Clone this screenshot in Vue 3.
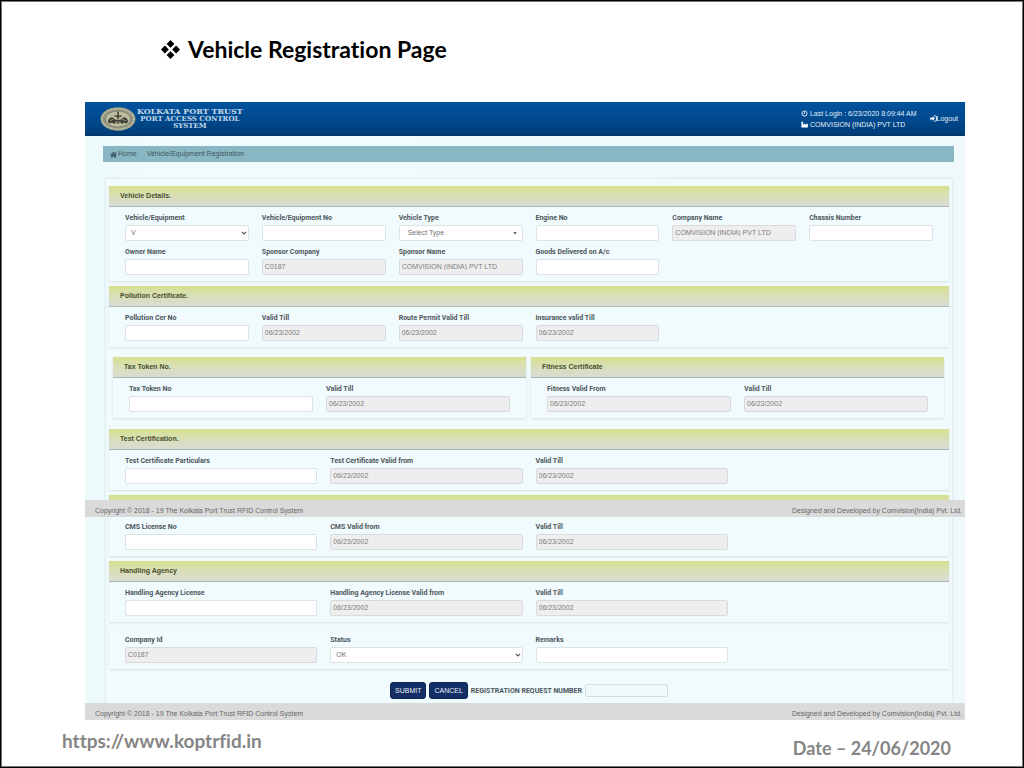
<template>
	<div class="slide">
		<h1 class="slide-title">
			<svg class="bullet" viewBox="0 0 18 18" aria-hidden="true">
				<path d="M9 0l3.700 3.700L9 7.400 5.300 3.700zM3.700 5.300L7.400 9l-3.700 3.700L0 9zM14.300 5.300L18 9l-3.700 3.700L10.600 9zM9 10.600l3.700 3.700L9 18l-3.700-3.700z" />
			</svg>
			<span>Vehicle Registration Page</span>
		</h1>

		<div class="app">
			<header class="topbar">
				<svg class="emblem" viewBox="0 0 36 24" aria-hidden="true">
					<ellipse cx="18" cy="12" rx="17.5" ry="11.7" fill="#8f9582" />
					<ellipse cx="18" cy="12" rx="16" ry="10.3" fill="none" stroke="#c3c3a2" stroke-width="2" stroke-dasharray="1.4 1" />
					<ellipse cx="18" cy="12" rx="12.6" ry="8" fill="#bdbd9e" stroke="#6b6d58" stroke-width=".6" />
					<path d="M17.3 4.500h1.400v4h3v1.200h-3V12h-1.400V9.700h-3V8.500h3z" fill="#33352c" />
					<path d="M8 15c0-3 2-5 4.500-4.500 1.500.3 1.500 2 3 2.200h5c1.500-.2 1.500-1.900 3-2.200C26 10 28 12 28 15l-2 1.500-2-1-2 1.500-2-1.500-2 1.500-2-1.500-2 1.500-2-1.500-2 1z" fill="#3a3b32" />
					<path d="M10 13.500l3-1M22 12.500l4 1M15 15h6" stroke="#c4c3a0" stroke-width=".7" />
				</svg>
				<div class="brand">
					<span class="brand-main">KOLKATA PORT TRUST</span>
					<span>PORT ACCESS CONTROL</span>
					<span>SYSTEM</span>
				</div>
				<div class="session">
					<div class="session-row">
						<svg viewBox="0 0 8 8" aria-hidden="true">
							<circle cx="4" cy="4" r="2.900" fill="none" stroke="#fff" />
							<path d="M4 2.200V4.200H2.800" fill="none" stroke="#fff" stroke-width=".8" />
						</svg>
						<span>Last Login : 6/23/2020 8:09:44 AM</span>
					</div>
					<div class="session-row">
						<svg viewBox="0 0 8 8" aria-hidden="true">
							<path d="M.5 7.500V.8h2v3.400L5 2.800v1.500L7.800 2.800v4.700z" fill="#fff" />
						</svg>
						<span>COMVISION (INDIA) PVT LTD</span>
					</div>
				</div>
				<a class="logout" href="#">
					<svg viewBox="0 0 8 8" aria-hidden="true">
						<path d="M4.500 1h1.700q1.200 0 1.200 1.200v3.600Q7.400 7 6.200 7H4.500" fill="none" stroke="#fff" />
						<path d="M0 3h2.800V1.300L5.800 4l-3 2.700V5H0z" fill="#fff" />
					</svg>
					<span>Logout</span>
				</a>
			</header>

			<nav class="crumbs">
				<a href="#">
					<svg viewBox="0 0 8 8" aria-hidden="true">
						<path d="M4 .8l4 3.400-.6.6L4 2 .6 4.800 0 4.200zM1.200 5L4 2.700 6.800 5v2.500H4.700V5.300H3.300v2.200H1.200zM6 1h1v1.800L6 2z" fill="#34505b" />
					</svg>
					<span>Home</span>
				</a>
				<span>Vehicle/Equipment Registration</span>
			</nav>

			<form class="form" @submit.prevent>
				<div v-for="(row, r) in rows" :key="r" class="row" :class="{ split: row.length > 1 }">
					<section v-for="card in row" :key="card.id" class="card">
						<h2 v-if="card.title !== undefined">{{ card.title }}</h2>
						<div class="fields" :class="['cols-' + card.cols, { plain: card.title === undefined }]">
							<div v-for="(f, i) in card.fields" :key="i" class="field">
								<label :for="card.id + i">{{ f.label }}</label>
								<div v-if="f.options" class="select" :class="f.kind">
									<select :id="card.id + i" v-model="f.value">
										<option v-for="o in f.options" :key="o">{{ o }}</option>
									</select>
									<svg viewBox="0 0 6 6" aria-hidden="true">
										<path v-if="f.kind === 'picker'" d="M1.200 2.200h3.600L3 4.400z" fill="#444" />
										<path v-else d="M.8 1.800L3 4l2.200-2.200" fill="none" stroke="#555" stroke-width="1.100" />
									</svg>
								</div>
								<input v-else :id="card.id + i" v-model="f.value" type="text" :disabled="f.locked">
							</div>
						</div>
						<div v-if="card.bar" class="copyright floating">
							<span>{{ copyLeft }}</span>
							<span>{{ copyRight }}</span>
						</div>
					</section>
				</div>

				<div class="actions">
					<button type="submit">SUBMIT</button>
					<button type="button">CANCEL</button>
					<label for="reqno">REGISTRATION REQUEST NUMBER</label>
					<input id="reqno" type="text" disabled>
				</div>
			</form>

			<footer class="copyright">
				<span>{{ copyLeft }}</span>
				<span>{{ copyRight }}</span>
			</footer>
		</div>

		<div class="slide-foot">
			<a href="https://www.koptrfid.in">https://www.koptrfid.in</a>
			<span class="date">Date – 24/06/2020</span>
		</div>
	</div>
</template>

<script setup>
import { reactive } from "vue";

const copyLeft = "Copyright © 2018 - 19 The Kolkata Port Trust RFID Control System";
const copyRight = "Designed and Developed by Comvision(India) Pvt. Ltd.";

const text = (label) => ({ label, value: "" });
const locked = (label, value = "06/23/2002") => ({ label, value, locked: true });

const rows = reactive([
	[{
		id: "vehicle", title: "Vehicle Details.", cols: 6,
		fields: [
			{ label: "Vehicle/Equipment", value: "V", options: ["V", "E"] },
			text("Vehicle/Equipment No"),
			{ label: "Vehicle Type", value: "Select Type", options: ["Select Type"], kind: "picker" },
			text("Engine No"),
			locked("Company Name", "COMVISION (INDIA) PVT LTD"),
			text("Chassis Number"),
			text("Owner Name"),
			locked("Sponsor Company", "C0187"),
			locked("Sponsor Name", "COMVISION (INDIA) PVT LTD"),
			text("Goods Delivered on A/c"),
		],
	}],
	[{
		id: "pollution", title: "Pollution Certificate.", cols: 6,
		fields: [text("Pollution Cer No"), locked("Valid Till"), locked("Route Permit Valid Till"), locked("Insurance valid Till")],
	}],
	[
		{ id: "tax", title: "Tax Token No.", cols: 2, fields: [text("Tax Token No"), locked("Valid Till")] },
		{ id: "fitness", title: "Fitness Certificate", cols: 2, fields: [locked("Fitness Valid From"), locked("Valid Till")] },
	],
	[{
		id: "test", title: "Test Certification.", cols: 4,
		fields: [text("Test Certificate Particulars"), locked("Test Certificate Valid from"), locked("Valid Till")],
	}],
	[{
		id: "cms", title: "", cols: 4, bar: true,
		fields: [text("CMS License No"), locked("CMS Valid from"), locked("Valid Till")],
	}],
	[{
		id: "agency", title: "Handling Agency", cols: 4,
		fields: [text("Handling Agency License"), locked("Handling Agency License Valid from"), locked("Valid Till")],
	}],
	[{
		id: "status", cols: 4,
		fields: [
			locked("Company Id", "C0187"),
			{ label: "Status", value: "OK", options: ["OK"] },
			text("Remarks"),
		],
	}],
]);
</script>

<style>
body { margin: 0; background: #fff; }
</style>

<style scoped>
* { box-sizing: border-box; }

.slide {
	min-height: 100vh;
	border: 1px solid #000;
	outline: 1px solid #777;
	outline-offset: -2px;
	background: #fff;
	font-family: Lato, "Liberation Sans", sans-serif;
}

.slide-title {
	display: flex;
	align-items: center;
	gap: 8px;
	margin: 0;
	padding: 32px 0 37px 160px;
	font-size: 23px;
	line-height: 32px;
	font-variant-ligatures: none;
	color: #000;
}
.bullet { width: 19px; height: 19px; }

.app {
	margin: 0 58px 0 84px;
	background: linear-gradient(90deg, #ebfafb, #f3fafd 10%, #eff9fb);
	font: 7px/12px "Liberation Sans", Arial, sans-serif;
	color: #444;
}

.topbar {
	display: flex;
	align-items: center;
	height: 34px;
	padding: 0 7px 0 15px;
	background: linear-gradient(#02529c, #004a8f 50%, #003d79);
	border-bottom: 1px solid #033463;
	color: #e4eef7;
}
.emblem { width: 36px; height: 24px; }
.brand {
	display: flex;
	flex-direction: column;
	align-items: center;
	margin-left: 1px;
	font: 700 7px/7px "DejaVu Serif", serif;
	color: #c3d9ea;
}
.brand-main { font-size: 8px; }
.session { margin-left: auto; }
.session-row { display: flex; align-items: center; gap: 2px; line-height: 11px; }
.session svg, .logout svg, .crumbs svg { width: 7px; height: 7px; }
.logout {
	display: flex;
	align-items: center;
	margin-left: 13px;
	color: inherit;
	text-decoration: none;
}

.crumbs {
	display: flex;
	gap: 10px;
	height: 16px;
	margin: 10px 11px 0 18px;
	padding: 0 7px;
	line-height: 16px;
	background: #88b7c3;
	color: #3d5660;
}
.crumbs a { display: flex; align-items: center; gap: 1px; color: inherit; text-decoration: none; }

.form {
	display: flex;
	flex-direction: column;
	gap: 5px;
	margin: 17px 13px 0 21px;
	padding: 7px 3px 4px;
	background: #f1fafc;
	box-shadow: 0 0 3px #cfdde2;
}

.row { display: flex; gap: 5px; }
.row.split { margin: 5px 5px 6px 4px; }

.card {
	position: relative;
	flex: 1;
	min-width: 0;
	background: #f1fafc;
	box-shadow: 0 1px 2px #d6e0e5;
}
.card h2 {
	height: 21px;
	margin: 0;
	padding-left: 11px;
	font-size: 7px;
	line-height: 20px;
	color: #48502f;
	background: linear-gradient(#d7e08f, #d9dfb4 45%, #d8dcd4);
	border-bottom: 1px solid #adb5b0;
}

.fields { display: grid; gap: 5px 13px; padding: 5px 16px 6px; }
.fields.plain { padding-top: 7px; }
.cols-2 { grid-template-columns: repeat(2, minmax(0, 1fr)); }
.cols-4 { grid-template-columns: repeat(4, minmax(0, 1fr)); }
.cols-6 { grid-template-columns: repeat(6, minmax(0, 1fr)); }

.field { display: flex; flex-direction: column; gap: 1px; }
label { font: 700 7px/12px Roboto, "Liberation Sans", sans-serif; color: #4b565d; white-space: nowrap; }

input, select {
	width: 100%;
	height: 16px;
	margin: 0;
	padding: 0 3px 1px 2px;
	border: 1px solid #dbe3e7;
	border-radius: 2px;
	background: #fff;
	font: 7px/13px "Liberation Sans", Arial, sans-serif;
	color: #707070;
}
input:disabled { background: #eee; border-color: #d8dbdd; color: #7c7c7c; }
select { appearance: none; padding-left: 5px; }

.select { position: relative; height: 16px; }
.select svg { position: absolute; top: 5px; right: 2px; width: 6px; height: 6px; pointer-events: none; }
.picker select { padding-left: 8px; }
.picker svg { right: 5px; }

.actions {
	display: flex;
	align-items: center;
	justify-content: center;
	gap: 3px;
	margin-top: 8px;
}
.actions button {
	height: 17px;
	padding: 0 4px;
	border: 1px solid #0d2552;
	border-radius: 3px;
	background: #142f66;
	color: #e8edf5;
	font: 7px/15px "Liberation Sans", Arial, sans-serif;
}
.actions input { width: 83px; height: 13px; background: #eff8fa; }

.copyright {
	display: flex;
	justify-content: space-between;
	height: 17px;
	padding: 2px 3px 0 10px;
	line-height: 17px;
	background: #dadada;
	color: #666;
}
.copyright.floating { position: absolute; top: 5px; left: -24px; right: -16px; }

.slide-foot {
	display: flex;
	justify-content: space-between;
	padding: 9px 72px 0 61px;
	font-size: 18px;
	font-weight: 700;
	line-height: 24px;
	font-variant-ligatures: none;
	color: #858585;
}
.slide-foot a { font-size: 19px; color: inherit; text-decoration: none; }
.date { padding-top: 7px; }
</style>
